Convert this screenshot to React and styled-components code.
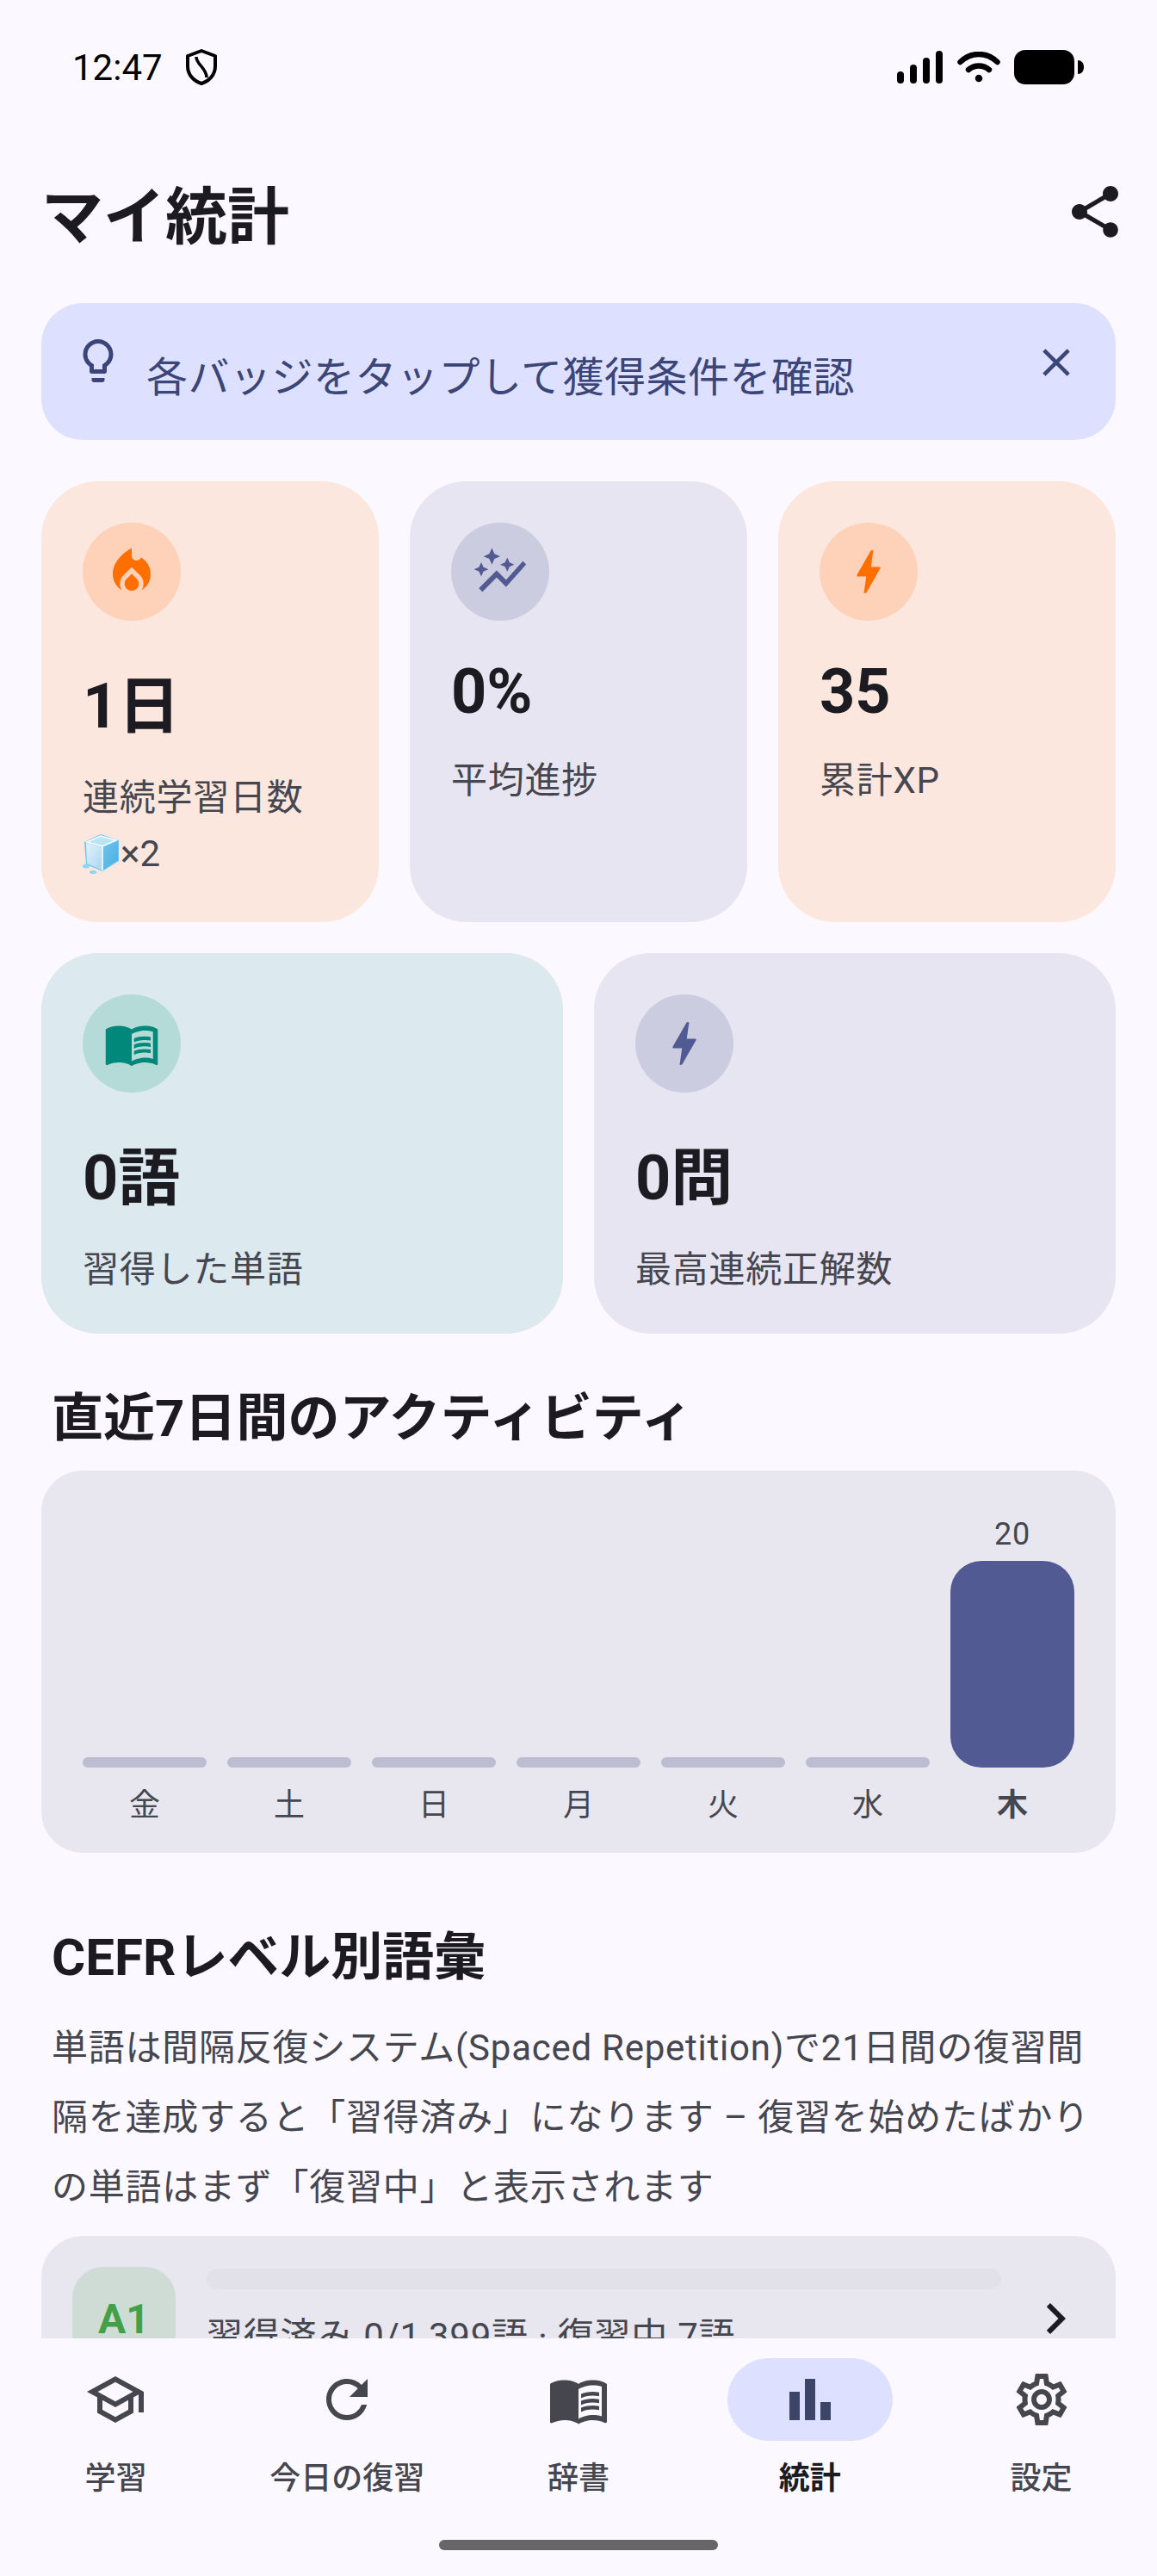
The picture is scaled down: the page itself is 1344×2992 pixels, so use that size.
import React from 'react';
import styled, { createGlobalStyle } from 'styled-components';
import {
  MdAutoGraph,
  MdBarChart,
  MdBolt,
  MdChevronRight,
  MdClose,
  MdLocalFireDepartment,
  MdMenuBook,
  MdOutlineLightbulb,
  MdOutlineSchool,
  MdOutlineSettings,
  MdRefresh,
  MdShare,
} from 'react-icons/md';

const tones = {
  orange: { card: '#fce7df', circle: '#fdd2b8', icon: '#ff6f00' },
  indigo: { card: '#e6e5f1', circle: '#cbcce0', icon: '#515a92' },
  teal: { card: '#dce9ee', circle: '#b5dbd9', icon: '#00897b' },
};

const GlobalStyle = createGlobalStyle`
  html, body {
    margin: 0;
    padding: 0;
    background: #fbf8ff;
  }

  body {
    font-family: Roboto, "Noto Sans CJK JP", sans-serif;
    color: #1b1b21;
  }
`;

const Screen = styled.div`
  width: 1344px;
  height: 2992px;
  display: flex;
  flex-direction: column;
  overflow: hidden;
  background: #fbf8ff;
`;

const Scroll = styled.main`
  flex: 1;
  min-height: 0;
  overflow: hidden;
  padding: 0 48px;
`;

const StatusBar = styled.div`
  height: 156px;
  display: flex;
  align-items: center;
  justify-content: space-between;
  padding: 0 84px 0 36px;
  margin: 0 -48px;
  padding-left: 84px;
`;

const StatusGroup = styled.div`
  display: flex;
  align-items: center;
  gap: ${(p) => p.$gap}px;
`;

const Time = styled.span`
  font-size: 42px;
  color: #000;
`;

const Header = styled.header`
  display: flex;
  align-items: center;
  justify-content: space-between;
  padding-top: 37px;
  margin-right: -12px;
`;

const Title = styled.h1`
  margin: 0;
  font-size: 72px;
  font-weight: 700;
`;

const ShareIcon = styled(MdShare)`
  color: #1b1b21;
  display: block;
`;

const Banner = styled.div`
  display: flex;
  align-items: flex-start;
  margin-top: 54px;
  height: 159px;
  box-sizing: border-box;
  padding: 37px 42px 0 36px;
  gap: 26px;
  background: #dde1ff;
  border-radius: 48px;
  color: #3c4578;

  svg {
    flex-shrink: 0;
  }
`;

const BannerText = styled.div`
  flex: 1;
  font-size: 48px;
  letter-spacing: 0.5px;
  margin-top: 10px;
`;

const CloseIcon = styled(MdClose)`
  margin-top: 5px;
`;

const StatRow = styled.div`
  display: grid;
  grid-template-columns: repeat(${(p) => p.$columns}, 1fr);
  gap: 36px;
  margin-top: ${(p) => p.$top}px;
`;

const StatCard = styled.div`
  padding: 48px;
  border-radius: 66px;
  background: ${(p) => tones[p.$tone].card};
  min-height: ${(p) => p.$minHeight}px;
  box-sizing: border-box;
`;

const IconCircle = styled.div`
  width: 114px;
  height: 114px;
  border-radius: 50%;
  display: flex;
  align-items: center;
  justify-content: center;
  background: ${(p) => tones[p.$tone].circle};
  color: ${(p) => tones[p.$tone].icon};
`;

const StatValue = styled.div`
  margin-top: 40px;
  font-size: 72px;
  font-weight: 700;
`;

const StatLabel = styled.div`
  margin-top: 26px;
  font-size: 42px;
  letter-spacing: 0.75px;
  color: #46464f;
  white-space: nowrap;
`;

const FreezeRow = styled.div`
  display: flex;
  align-items: center;
  margin-top: 14px;
  font-size: 42px;
  color: #46464f;
`;

const SectionTitle = styled.h2`
  margin: ${(p) => p.$top}px 0 0;
  padding: 0 12px;
  font-size: 60px;
  font-weight: 700;
`;

const ChartCard = styled.section`
  margin-top: 23px;
  padding: 48px 48px 33px;
  border-radius: 48px;
  background: #e8e7f0;
`;

const Bars = styled.div`
  display: grid;
  grid-template-columns: repeat(7, 144px);
  gap: 24px;
`;

const BarColumn = styled.div`
  height: 297px;
  display: flex;
  flex-direction: column;
  justify-content: flex-end;
  align-items: stretch;
`;

const BarValue = styled.div`
  font-size: 36px;
  line-height: 42px;
  margin-bottom: 10px;
  text-align: center;
  color: #46464f;
  letter-spacing: 0.75px;
`;

const Bar = styled.div`
  height: ${(p) => (p.$active ? 240 : 12)}px;
  border-radius: ${(p) => (p.$active ? 36 : 6)}px;
  background: ${(p) => (p.$active ? '#515a92' : '#bcbdd3')};
`;

const DayLabel = styled.div`
  margin-top: 14px;
  font-size: 36px;
  text-align: center;
  font-weight: ${(p) => (p.$active ? 700 : 400)};
  color: #46464f;
`;

const Paragraph = styled.p`
  margin: 27px 0 0;
  padding: 0 12px;
  font-size: 42px;
  line-height: 81px;
  letter-spacing: 0.75px;
  color: #46464f;
`;

const LevelCard = styled.div`
  margin-top: 16px;
  padding: 36px 34px 36px 36px;
  border-radius: 48px;
  background: #e8e7f0;
  display: flex;
  align-items: center;
`;

const LevelBadge = styled.div`
  width: 120px;
  height: 120px;
  flex-shrink: 0;
  border-radius: 36px;
  background: #cedcd5;
  color: #43a047;
  font-size: 48px;
  font-weight: 700;
  display: flex;
  align-items: center;
  justify-content: center;
`;

const LevelBody = styled.div`
  flex: 1;
  min-width: 0;
  margin: 0 27px 0 36px;
  align-self: flex-start;
  padding-top: 2px;
`;

const Track = styled.div`
  height: 24px;
  border-radius: 12px;
  background: #e2e1ea;
`;

const LevelText = styled.div`
  margin-top: 20px;
  font-size: 42px;
  letter-spacing: 0.75px;
  color: #46464f;
  white-space: nowrap;
`;

const Chevron = styled(MdChevronRight)`
  flex-shrink: 0;
  color: #1b1b21;
`;

const Nav = styled.nav`
  height: 276px;
  flex-shrink: 0;
  box-sizing: border-box;
  padding-top: 23px;
  background: #fbf8ff;
  display: flex;
  flex-direction: column;
`;

const NavItems = styled.div`
  display: grid;
  grid-template-columns: repeat(5, 1fr);
`;

const NavItem = styled.div`
  display: flex;
  flex-direction: column;
  align-items: center;
  color: ${(p) => (p.$active ? '#1b1b21' : '#46464f')};
`;

const NavPill = styled.div`
  width: 192px;
  height: 96px;
  border-radius: 48px;
  display: flex;
  align-items: center;
  justify-content: center;
  background: ${(p) => (p.$active ? '#dde1ff' : 'transparent')};
  color: ${(p) => (p.$active ? '#3c4568' : '#46464f')};
`;

const NavLabel = styled.div`
  margin-top: 14px;
  font-size: 36px;
  font-weight: ${(p) => (p.$active ? 700 : 500)};
`;

const HomeIndicator = styled.div`
  width: 324px;
  height: 12px;
  margin: 49px auto 0;
  border-radius: 6px;
  background: #666;
`;

const ShieldGlyph = () => (
  <svg width="38" height="42" viewBox="0 0 38 42" fill="none" stroke="#000" strokeWidth="4">
    <path d="M19 2 L35 8 V20 C35 30 28 37 19 40 C10 37 3 30 3 20 V8 Z" strokeLinejoin="round" />
    <path d="M13 9 C13 18 25 22 25 33" strokeWidth="3.5" />
  </svg>
);

const SignalGlyph = () => (
  <svg width="54" height="38" viewBox="0 0 54 38" fill="#000">
    <rect x="0" y="24" width="8" height="14" rx="4" />
    <rect x="15" y="16" width="8" height="22" rx="4" />
    <rect x="30" y="8" width="8" height="30" rx="4" />
    <rect x="45" y="0" width="8" height="38" rx="4" />
  </svg>
);

const WifiGlyph = () => (
  <svg width="50" height="36" viewBox="0 0 50 36" fill="none" stroke="#000" strokeWidth="6.5" strokeLinecap="round">
    <path d="M3.5 12 C16 0 34 0 46.5 12" />
    <path d="M13 21 C20 15 30 15 37 21" />
    <circle cx="25" cy="31" r="3" fill="#000" strokeWidth="2.5" />
  </svg>
);

const BatteryGlyph = () => (
  <svg width="82" height="40" viewBox="0 0 82 40" fill="#000">
    <rect x="0" y="0" width="70" height="40" rx="13" />
    <path d="M74 12 C78 12 81 15 81 20 C81 25 78 28 74 28 Z" />
  </svg>
);

const IceCube = () => (
  <svg width="44" height="48" viewBox="0 0 44 48">
    <defs>
      <linearGradient id="iceLeft" x1="0" y1="0" x2="1" y2="1">
        <stop offset="0" stopColor="#e3f3fc" />
        <stop offset="1" stopColor="#a9d4f0" />
      </linearGradient>
      <linearGradient id="iceRight" x1="0" y1="0" x2="1" y2="1">
        <stop offset="0" stopColor="#6cc3ea" />
        <stop offset="1" stopColor="#4db0e2" />
      </linearGradient>
    </defs>
    <path d="M2 10 L21 1 L42 8 L42 32 L23 44 L4 36 Z" fill="#6cc6f0" />
    <path d="M4 11 L23 16 L23 43 L5 35 Z" fill="url(#iceLeft)" />
    <path d="M24 16 L41 9 L41 31 L24 42 Z" fill="url(#iceRight)" />
    <path d="M5 10 L21 3 L39 8 L23 15 Z" fill="#b9e3f7" stroke="#fff" strokeWidth="1.5" />
    <path d="M23 15 V43" stroke="#fff" strokeWidth="1.5" />
    <ellipse cx="4" cy="38" rx="4" ry="2.5" fill="#8fd4f2" />
    <ellipse cx="12" cy="45" rx="4" ry="2" fill="#8fd4f2" />
  </svg>
);

const topStats = [
  { tone: 'orange', icon: MdLocalFireDepartment, value: '1日', label: '連続学習日数', freeze: 2 },
  { tone: 'indigo', icon: MdAutoGraph, value: '0%', label: '平均進捗' },
  { tone: 'orange', icon: MdBolt, value: '35', label: '累計XP' },
];

const lowerStats = [
  { tone: 'teal', icon: MdMenuBook, value: '0語', label: '習得した単語' },
  { tone: 'indigo', icon: MdBolt, value: '0問', label: '最高連続正解数' },
];

const days = [
  { day: '金' },
  { day: '土' },
  { day: '日' },
  { day: '月' },
  { day: '火' },
  { day: '水' },
  { day: '木', count: 20 },
];

const navItems = [
  { icon: MdOutlineSchool, label: '学習' },
  { icon: MdRefresh, label: '今日の復習' },
  { icon: MdMenuBook, label: '辞書' },
  { icon: MdBarChart, label: '統計', active: true },
  { icon: MdOutlineSettings, label: '設定' },
];

const Stat = ({ stat, minHeight }) => {
  const Icon = stat.icon;
  return (
    <StatCard $tone={stat.tone} $minHeight={minHeight}>
      <IconCircle $tone={stat.tone}>
        <Icon size={66} />
      </IconCircle>
      <StatValue>{stat.value}</StatValue>
      <StatLabel>{stat.label}</StatLabel>
      {stat.freeze && (
        <FreezeRow>
          <IceCube />
          ×{stat.freeze}
        </FreezeRow>
      )}
    </StatCard>
  );
};

const App = () => (
  <Screen>
    <GlobalStyle />
    <Scroll>
      <StatusBar>
        <StatusGroup $gap={26}>
          <Time>12:47</Time>
          <ShieldGlyph />
        </StatusGroup>
        <StatusGroup $gap={16}>
          <SignalGlyph />
          <WifiGlyph />
          <BatteryGlyph />
        </StatusGroup>
      </StatusBar>

      <Header>
        <Title>マイ統計</Title>
        <ShareIcon size={72} />
      </Header>

      <Banner>
        <MdOutlineLightbulb size={60} />
        <BannerText>各バッジをタップして獲得条件を確認</BannerText>
        <CloseIcon size={54} />
      </Banner>

      <StatRow $columns={3} $top={48}>
        {topStats.map((stat) => (
          <Stat key={stat.label} stat={stat} minHeight={512} />
        ))}
      </StatRow>

      <StatRow $columns={2} $top={36}>
        {lowerStats.map((stat) => (
          <Stat key={stat.label} stat={stat} minHeight={432} />
        ))}
      </StatRow>

      <SectionTitle $top={49}>直近7日間のアクティビティ</SectionTitle>
      <ChartCard>
        <Bars>
          {days.map(({ day, count }) => (
            <div key={day}>
              <BarColumn>
                {count && <BarValue>{count}</BarValue>}
                <Bar $active={!!count} />
              </BarColumn>
              <DayLabel $active={!!count}>{day}</DayLabel>
            </div>
          ))}
        </Bars>
      </ChartCard>

      <SectionTitle $top={72}>CEFRレベル別語彙</SectionTitle>
      <Paragraph>
        単語は間隔反復システム(Spaced Repetition)で21日間の復習間隔を達成すると「習得済み」になります – 復習を始めたばかりの単語はまず「復習中」と表示されます
      </Paragraph>

      <LevelCard>
        <LevelBadge>A1</LevelBadge>
        <LevelBody>
          <Track />
          <LevelText>習得済み 0/1,399語 · 復習中 7語</LevelText>
        </LevelBody>
        <Chevron size={72} />
      </LevelCard>
    </Scroll>

    <Nav>
      <NavItems>
        {navItems.map(({ icon: Icon, label, active }) => (
          <NavItem key={label} $active={active}>
            <NavPill $active={active}>
              <Icon size={72} />
            </NavPill>
            <NavLabel $active={active}>{label}</NavLabel>
          </NavItem>
        ))}
      </NavItems>
      <HomeIndicator />
    </Nav>
  </Screen>
);

export default App;
